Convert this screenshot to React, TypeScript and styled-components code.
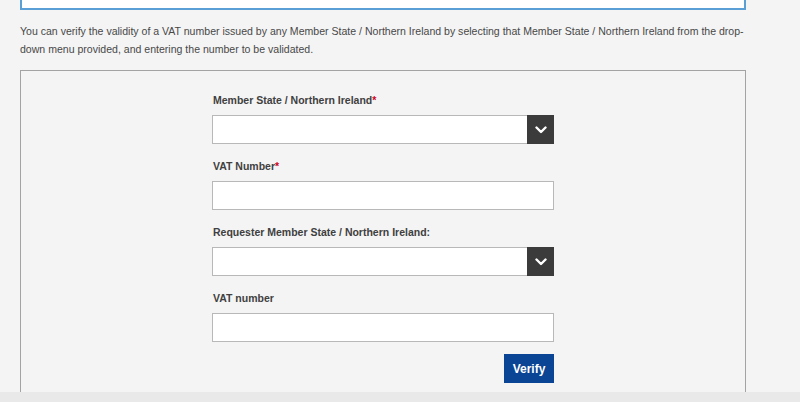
import React from 'react'
import styled, { createGlobalStyle } from 'styled-components'

const GlobalStyle = createGlobalStyle`
  html, body {
    margin: 0;
    padding: 0;
    background: #f4f4f4;
    font-family: "Liberation Sans", Arial, sans-serif;
  }
`;

const Page = styled.div`
  height: 402px;
  display: flex;
  flex-direction: column;
  overflow: hidden;
`;

const Viewport = styled.div`
  height: 392px;
  overflow: hidden;
  padding: 0 54px 0 20px;
`;

const SearchBox = styled.div`
  height: 8px;
  background: #ffffff;
  border: 2px solid #5a9fd6;
  border-top: none;
`;

const Intro = styled.p`
  margin: 12px 0 12px;
  font-size: 10.55px;
  line-height: 18px;
  color: #484848;
`;

const Panel = styled.div`
  border: 1px solid #a3a3a3;
  border-bottom: none;
  height: 340px;
  padding-top: 21px;
  box-sizing: border-box;
`;

const Form = styled.form`
  width: 342px;
  margin: 0 auto;
  display: flex;
  flex-direction: column;
`;

const Field = styled.div`
  display: flex;
  flex-direction: column;
  margin-bottom: 14px;
`;

const Label = styled.label`
  font-size: 10.5px;
  font-weight: bold;
  line-height: 16px;
  color: #404040;
  margin-bottom: 7px;
  padding-left: 1px;
`;

const Req = styled.span`
  color: #d0021b;
`;

const TextInput = styled.input`
  height: 29px;
  box-sizing: border-box;
  border: 1px solid #b8b8b8;
  background: #ffffff;
  margin: 0;
  padding: 0 6px;
  outline: none;
`;

const SelectWrap = styled.div`
  display: flex;
  height: 29px;
  box-sizing: border-box;
  border: 1px solid #b8b8b8;
  background: #ffffff;
`;

const SelectBody = styled.div`
  flex: 1;
`;

const Arrow = styled.div`
  width: 27px;
  margin: -1px -1px -1px 0;
  background: #3b3b3b;
  display: flex;
  align-items: center;
  justify-content: center;
`;

const Actions = styled.div`
  display: flex;
  justify-content: flex-end;
  margin-top: -2px;
`;

const Button = styled.button`
  width: 50px;
  height: 29px;
  border: none;
  background: #0a4495;
  color: #ffffff;
  font-family: inherit;
  font-size: 12px;
  font-weight: bold;
  padding: 0;
  cursor: pointer;
`;

const Footer = styled.div`
  height: 10px;
  background: #e9e9e9;
`;

function Chevron() {
  return (
    <svg width="12" height="8" viewBox="0 0 12 8">
      <path d="M1.5 1.5 L6 6 L10.5 1.5" fill="none" stroke="#ffffff" strokeWidth="2.4" strokeLinecap="round" strokeLinejoin="round" />
    </svg>
  )
}

function Select() {
  return (
    <SelectWrap>
      <SelectBody />
      <Arrow><Chevron /></Arrow>
    </SelectWrap>
  )
}

export default function App() {
  return (
    <Page>
      <GlobalStyle />
      <Viewport>
        <SearchBox />
        <Intro>
          You can verify the validity of a VAT number issued by any Member State / Northern Ireland by selecting that Member State / Northern Ireland from the drop-down menu provided, and entering the number to be validated.
        </Intro>
        <Panel>
          <Form onSubmit={e => e.preventDefault()}>
            <Field>
              <Label>Member State / Northern Ireland<Req>*</Req></Label>
              <Select />
            </Field>
            <Field>
              <Label>VAT Number<Req>*</Req></Label>
              <TextInput />
            </Field>
            <Field>
              <Label>Requester Member State / Northern Ireland:</Label>
              <Select />
            </Field>
            <Field>
              <Label>VAT number</Label>
              <TextInput />
            </Field>
            <Actions>
              <Button type="submit">Verify</Button>
            </Actions>
          </Form>
        </Panel>
      </Viewport>
      <Footer />
    </Page>
  )
}
